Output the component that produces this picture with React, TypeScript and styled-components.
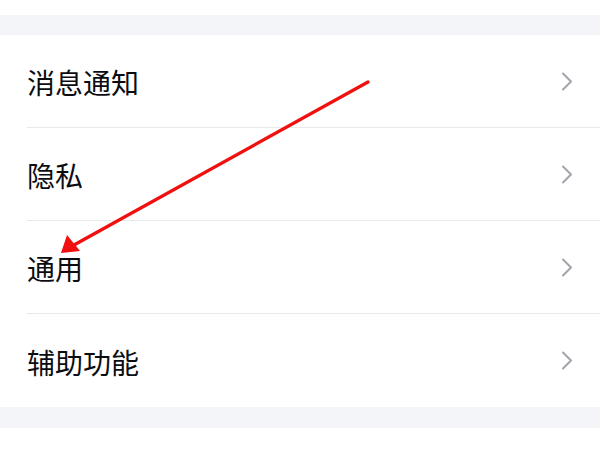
import React from "react";
import styled, { createGlobalStyle } from "styled-components";

const Global = createGlobalStyle`
  html, body { margin: 0; padding: 0; background: #ffffff; }
  body { font-family: "Noto Sans CJK SC", "Noto Sans", sans-serif; }
`;

const Page = styled.div`
  position: relative;
  width: 600px;
  height: 450px;
  overflow: hidden;
  background: #ffffff;
  display: flex;
  flex-direction: column;
`;

const Band = styled.div<{ $h: number }>`
  height: ${(p) => p.$h}px;
  background: ${(p) => (p.$h > 16 ? "#f4f5f9" : "#ffffff")};
  flex-shrink: 0;
`;

const List = styled.div`
  background: #ffffff;
  display: flex;
  flex-direction: column;
`;

const Row = styled.div<{ $last?: boolean }>`
  height: 93px;
  margin-left: 27px;
  padding-right: 27px;
  display: flex;
  align-items: center;
  justify-content: space-between;
  border-bottom: ${(p) => (p.$last ? "none" : "1px solid #e9e9ec")};
  box-sizing: border-box;
`;

const Label = styled.span`
  font-size: 28px;
  font-weight: 400;
  color: #0c0d12;
  line-height: 1;
  margin-top: 2px;
`;

const Chevron = styled.svg`
  width: 12px;
  height: 19px;
  flex-shrink: 0;
`;

const Overlay = styled.svg`
  position: absolute;
  left: 0;
  top: 0;
  width: 600px;
  height: 450px;
  pointer-events: none;
`;

const items = ["消息通知", "隐私", "通用", "辅助功能"];

export default function App() {
  return (
    <Page>
      <Global />
      <Band $h={15} />
      <Band $h={20} />
      <List>
        {items.map((t, i) => (
          <Row key={t} $last={i === items.length - 1}>
            <Label>{t}</Label>
            <Chevron viewBox="0 0 12 19">
              <path d="M2 1.5 L10 9.5 L2 17.5" fill="none" stroke="#a3a3ab" strokeWidth="2" strokeLinecap="round" strokeLinejoin="round" />
            </Chevron>
          </Row>
        ))}
      </List>
      <Band $h={21} />
      <Overlay viewBox="0 0 600 450">
        <line x1="368" y1="82" x2="74" y2="245" stroke="#f01010" strokeWidth="3.3" strokeLinecap="round" />
        <polygon points="61,253 67,235 80,251" fill="#f01010" />
      </Overlay>
    </Page>
  );
}
